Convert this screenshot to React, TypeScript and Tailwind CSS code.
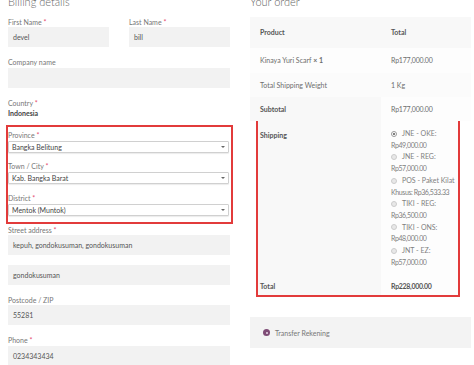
import React from "react";

const Req = () => <span className="text-[#e5476b]">*</span>;

function Label({ text, req, className = "" }: { text: string; req?: boolean; className?: string }) {
  return (
    <div className={"h-[10px] text-[7px] leading-[10px] text-[#777] " + className}>
      {text}
      {req && <Req />}
    </div>
  );
}

function Input({ value, className = "" }: { value?: string; className?: string }) {
  return (
    <div className={"h-[20px] bg-[#f2f2f2] pl-[5px] flex items-center text-[7px] text-[#555] " + className}>
      {value}
    </div>
  );
}

function Select({ value }: { value: string }) {
  return (
    <div className="mt-[1px] mr-[2px] h-[12px] bg-white border border-[#d0d0d0] rounded-[1px] shadow-[0_1px_1px_rgba(0,0,0,0.08)] pl-[3px] pr-[3px] flex items-center justify-between text-[7px] text-[#444]">
      <span>{value}</span>
      <span className="w-0 h-0 border-l-[2px] border-r-[2px] border-t-[2px] border-l-transparent border-r-transparent border-t-[#666]" />
    </div>
  );
}

const shipping = [
  ["JNE - OKE:", "Rp49,000.00"],
  ["JNE - REG:", "Rp57,000.00"],
  ["POS - Paket Kilat", "Khusus: Rp36,533.33"],
  ["TIKI - REG:", "Rp36,500.00"],
  ["TIKI - ONS:", "Rp48,000.00"],
  ["JNT - EZ:", "Rp57,000.00"],
];

export default function App() {
  return (
    <div className="w-[474px] h-[365px] overflow-hidden bg-white font-['Lato',sans-serif] flex">
      {/* billing */}
      <div className="ml-[8px] w-[222px] shrink-0">
        <h3 className="mt-[-5px] h-[14px] text-[11px] leading-[14px] font-light text-[#666]">Billing details</h3>
        <div className="mt-[8px] flex gap-[20px]">
          <div className="flex-1">
            <Label text="First Name " req />
            <Input value="devel" />
          </div>
          <div className="flex-1">
            <Label text="Last Name " req />
            <Input value="bill" />
          </div>
        </div>
        <Label text="Company name" className="mt-[10px]" />
        <Input className="mt-[1px]" />
        <Label text="Country " req className="mt-[10px]" />
        <div className="h-[10px] text-[7px] leading-[10px] font-bold text-[#444]">Indonesia</div>

        <div className="mt-[7px] ml-[-2px] mr-[-3px] border-2 border-[#e23b3b] pt-[3px] pb-[6px]">
          <Label text="Province " req />
          <Select value="Bangka Belitung" />
          <Label text="Town / City " req className="mt-[8px]" />
          <Select value="Kab. Bangka Barat" />
          <Label text="District " req className="mt-[9px]" />
          <Select value="Mentok (Muntok)" />
        </div>

        <Label text="Street address " req className="mt-[1px]" />
        <Input value="kepuh, gondokusuman, gondokusuman" />
        <Input value="gondokusuman" className="mt-[10px]" />
        <Label text="Postcode / ZIP" className="mt-[10px]" />
        <Input value="55281" />
        <Label text="Phone " req className="mt-[10px]" />
        <Input value="0234343434" className="mt-[1px]" />
      </div>

      {/* order */}
      <div className="ml-[20px] w-[221px] shrink-0">
        <h3 className="mt-[-5px] h-[14px] text-[11px] leading-[14px] font-light text-[#666]">Your order</h3>
        <div className="mt-[8px] text-[7px] text-[#6d6d6d]">
          <div className="h-[31px] flex items-center bg-[#f8f8f8] font-bold text-[#555]">
            <div className="w-[131px] pl-[10px]">Product</div>
            <div className="pl-[10px]">Total</div>
          </div>
          <div className="h-[25px] flex items-center bg-[#fdfdfd]">
            <div className="w-[131px] pl-[10px]">
              Kinaya Yuri Scarf <span className="font-bold">× 1</span>
            </div>
            <div className="pl-[10px] tracking-[-0.2px]">Rp177,000.00</div>
          </div>
          <div className="h-[24px] flex items-center bg-[#fbfbfb]">
            <div className="w-[131px] pl-[10px]">Total Shipping Weight</div>
            <div className="pl-[10px]">1 Kg</div>
          </div>
          <div className="h-[24px] flex">
            <div className="w-[131px] pl-[10px] bg-[#f8f8f8] flex items-center font-bold text-[#555]">Subtotal</div>
            <div className="flex-1 pl-[10px] bg-[#fdfdfd] flex items-center tracking-[-0.2px]">Rp177,000.00</div>
          </div>

          <div className="mt-[-2px] ml-[6px] mr-[11px] border-2 border-[#e23b3b]">
            <div className="flex">
              <div className="w-[123px] pl-[2px] pt-[9px] bg-[#f8f8f8] leading-[10px] font-bold text-[#555]">Shipping</div>
              <div className="flex-1 pl-[10px] pt-[7px] pb-[9px] bg-[#fdfdfd] leading-[11.7px] text-[#808080]">
                {shipping.map(([a, b], i) => (
                  <div key={i}>
                    <div className="flex items-center whitespace-nowrap">
                      <span
                        className={
                          "w-[6px] h-[6px] rounded-full border flex items-center justify-center " +
                          (i === 0 ? "border-[#999] bg-white" : "border-[#ccc] bg-[#e8e8e8]")
                        }
                      >
                        {i === 0 && <span className="w-[2px] h-[2px] rounded-full bg-[#555]" />}
                      </span>
                      <span className="ml-[5px]">{a}</span>
                    </div>
                    <div className="whitespace-nowrap tracking-[-0.4px]">{b}</div>
                  </div>
                ))}
              </div>
            </div>
            <div className="h-[18px] flex">
              <div className="w-[123px] pl-[2px] bg-[#f8f8f8] flex items-center font-bold text-[#555]">Total</div>
              <div className="flex-1 pl-[10px] bg-[#fdfdfd] flex items-center font-bold text-[#555] tracking-[-0.3px]">Rp228,000.00</div>
            </div>
          </div>
        </div>

        <div className="mt-[20px] h-[31px] bg-[#f3f3f3] flex items-center pl-[13px] text-[7px] text-[#777]">
          <span className="w-[7px] h-[7px] rounded-full bg-[#7e4c76] flex items-center justify-center">
            <span className="w-[2px] h-[2px] rounded-full bg-[#e9d9e6]" />
          </span>
          <span className="ml-[5px]">Transfer Rekening</span>
        </div>
      </div>
    </div>
  );
}
